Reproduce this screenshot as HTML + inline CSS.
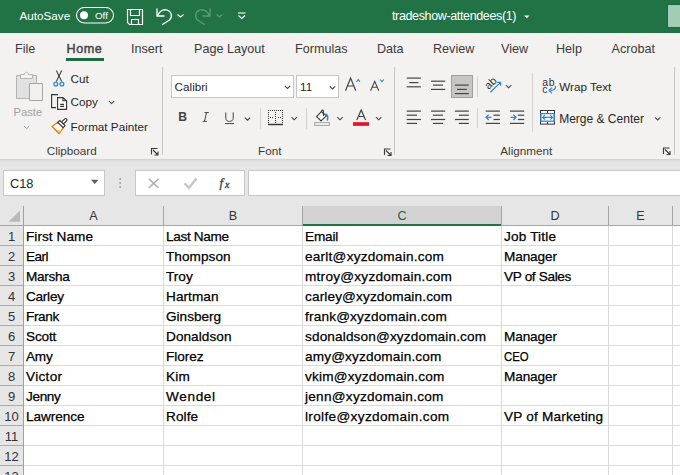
<!DOCTYPE html><html><head><meta charset="utf-8"><style>
*{box-sizing:border-box;margin:0;padding:0}
html,body{width:680px;height:475px;overflow:hidden;background:#fff;font-family:"Liberation Sans",sans-serif}
.a{position:absolute}
.t{position:absolute;white-space:nowrap;line-height:1}
svg{position:absolute;left:0;top:0}
</style></head><body>
<div class="a" style="left:0px;top:0px;width:680px;height:33px;background:#217346;"></div>
<div class="a" style="left:0px;top:33px;width:680px;height:126px;background:#f3f2f1;"></div>
<div class="a" style="left:0px;top:159px;width:680px;height:67px;background:#e6e6e6;"></div>
<div class="a" style="left:0px;top:226px;width:23px;height:249px;background:#e6e6e6;"></div>
<div class="a" style="left:0px;top:159px;width:680px;height:1px;background:#d4d4d4;"></div>
<div class="a" style="left:0px;top:160px;width:680px;height:3px;background:linear-gradient(#dcdcdc,#e6e6e6);"></div>
<div class="t" style="left:19.5px;top:10.10px;font-size:11.7px;color:#fff;font-weight:400;letter-spacing:0px;">AutoSave</div>
<div class="t" style="left:95px;top:10.60px;font-size:9.8px;color:#fff;font-weight:400;letter-spacing:0px;">Off</div>
<div class="t" style="left:392px;top:10.42px;font-size:12.5px;color:#fff;font-weight:400;letter-spacing:-0.36px;">tradeshow-attendees(1)</div>
<div class="a" style="left:667px;top:4px;width:13px;height:24px;background:#a0cdb4;border:1px solid #1a6b3c;border-right:none"></div>
<div class="t" style="left:15px;top:43.33px;font-size:12.6px;color:#3b3a39;font-weight:400;letter-spacing:0px;">File</div>
<div class="t" style="left:66.5px;top:43.33px;font-size:12.6px;color:#444;font-weight:400;letter-spacing:0.55px;-webkit-text-stroke:0.45px #444">Home</div>
<div class="t" style="left:131px;top:43.33px;font-size:12.6px;color:#3b3a39;font-weight:400;letter-spacing:0px;">Insert</div>
<div class="t" style="left:194px;top:43.33px;font-size:12.6px;color:#3b3a39;font-weight:400;letter-spacing:0px;">Page Layout</div>
<div class="t" style="left:295px;top:43.33px;font-size:12.6px;color:#3b3a39;font-weight:400;letter-spacing:0px;">Formulas</div>
<div class="t" style="left:377px;top:43.33px;font-size:12.6px;color:#3b3a39;font-weight:400;letter-spacing:0px;">Data</div>
<div class="t" style="left:433px;top:43.33px;font-size:12.6px;color:#3b3a39;font-weight:400;letter-spacing:0px;">Review</div>
<div class="t" style="left:501px;top:43.33px;font-size:12.6px;color:#3b3a39;font-weight:400;letter-spacing:0px;">View</div>
<div class="t" style="left:556px;top:43.33px;font-size:12.6px;color:#3b3a39;font-weight:400;letter-spacing:0px;">Help</div>
<div class="t" style="left:611.5px;top:43.33px;font-size:12.6px;color:#3b3a39;font-weight:400;letter-spacing:0px;">Acrobat</div>
<div class="a" style="left:66px;top:58px;width:38px;height:3px;background:#1d6b40;"></div>
<div class="t" style="left:13.6px;top:107.42px;font-size:11.2px;color:#a19f9d;font-weight:400;letter-spacing:0px;">Paste</div>
<div class="t" style="left:70.6px;top:72.80px;font-size:11.7px;color:#262626;font-weight:400;letter-spacing:0px;">Cut</div>
<div class="t" style="left:70.6px;top:96.40px;font-size:11.7px;color:#262626;font-weight:400;letter-spacing:0px;">Copy</div>
<div class="t" style="left:70.6px;top:120.60px;font-size:11.7px;color:#262626;font-weight:400;letter-spacing:0px;">Format Painter</div>
<div class="t" style="left:46.7px;top:145.30px;font-size:11.7px;color:#3b3a39;font-weight:400;letter-spacing:0px;">Clipboard</div>
<div class="t" style="left:258.1px;top:145.40px;font-size:11.7px;color:#3b3a39;font-weight:400;letter-spacing:0px;">Font</div>
<div class="t" style="left:500.3px;top:145.10px;font-size:11.7px;color:#3b3a39;font-weight:400;letter-spacing:0px;">Alignment</div>
<div class="t" style="left:559.2px;top:80.90px;font-size:11.7px;color:#262626;font-weight:400;letter-spacing:0px;">Wrap Text</div>
<div class="t" style="left:559.2px;top:112.64px;font-size:12px;color:#262626;font-weight:400;letter-spacing:0px;">Merge &amp; Center</div>
<div class="a" style="left:171px;top:75px;width:123px;height:23px;background:#fff;border:1px solid #c8c6c4"></div>
<div class="a" style="left:296px;top:75px;width:43px;height:23px;background:#fff;border:1px solid #c8c6c4"></div>
<div class="t" style="left:174.6px;top:81.10px;font-size:11.7px;color:#262626;font-weight:400;letter-spacing:0px;">Calibri</div>
<div class="t" style="left:300px;top:81.10px;font-size:11.7px;color:#262626;font-weight:400;letter-spacing:0px;">11</div>
<div class="a" style="left:162px;top:67px;width:1px;height:88px;background:#c8c6c4;"></div>
<div class="a" style="left:394px;top:67px;width:1px;height:88px;background:#c8c6c4;"></div>
<div class="a" style="left:674px;top:67px;width:1px;height:88px;background:#c8c6c4;"></div>
<div class="a" style="left:260px;top:108px;width:1px;height:21px;background:#d2d0ce;"></div>
<div class="a" style="left:306px;top:108px;width:1px;height:21px;background:#d2d0ce;"></div>
<div class="a" style="left:477px;top:76px;width:1px;height:21px;background:#d2d0ce;"></div>
<div class="a" style="left:477px;top:108px;width:1px;height:20px;background:#d2d0ce;"></div>
<div class="a" style="left:532px;top:73px;width:1px;height:59px;background:#d2d0ce;"></div>
<div class="a" style="left:451px;top:75px;width:22px;height:23px;background:#c8c6c4;border:1px solid #a19f9d"></div>
<div class="a" style="left:3px;top:170px;width:102px;height:26px;background:#fff;border:1px solid #c6c6c6"></div>
<div class="t" style="left:10px;top:177.66px;font-size:12.8px;color:#262626;font-weight:400;letter-spacing:0px;">C18</div>
<div class="a" style="left:135px;top:170px;width:110px;height:26px;background:#fff;border:1px solid #c6c6c6"></div>
<div class="a" style="left:248px;top:170px;width:440px;height:26px;background:#fff;border:1px solid #c6c6c6"></div>
<div class="a" style="left:24px;top:226px;width:656px;height:249px;background:#fff;"></div>
<div class="a" style="left:163px;top:226px;width:1px;height:249px;background:#d9d9d9;"></div>
<div class="a" style="left:163px;top:206px;width:1px;height:19px;background:#a6a6a6;"></div>
<div class="a" style="left:302px;top:226px;width:1px;height:249px;background:#d9d9d9;"></div>
<div class="a" style="left:302px;top:206px;width:1px;height:19px;background:#a6a6a6;"></div>
<div class="a" style="left:501px;top:226px;width:1px;height:249px;background:#d9d9d9;"></div>
<div class="a" style="left:501px;top:206px;width:1px;height:19px;background:#a6a6a6;"></div>
<div class="a" style="left:608px;top:226px;width:1px;height:249px;background:#d9d9d9;"></div>
<div class="a" style="left:608px;top:206px;width:1px;height:19px;background:#a6a6a6;"></div>
<div class="a" style="left:672px;top:226px;width:1px;height:249px;background:#d9d9d9;"></div>
<div class="a" style="left:672px;top:206px;width:1px;height:19px;background:#a6a6a6;"></div>
<div class="a" style="left:0px;top:225px;width:680px;height:1px;background:#a6a6a6;"></div>
<div class="a" style="left:303px;top:206px;width:198px;height:18px;background:#d2d2d2;"></div>
<div class="a" style="left:303px;top:224px;width:198px;height:2px;background:#217346;"></div>
<div class="a" style="left:24px;top:245px;width:656px;height:1px;background:#dadada;"></div>
<div class="a" style="left:0px;top:245px;width:23px;height:1px;background:#ababab;"></div>
<div class="t" style="left:0;width:23px;text-align:center;top:229.8px;font-size:13px;color:#333">1</div>
<div class="a" style="left:24px;top:265px;width:656px;height:1px;background:#dadada;"></div>
<div class="a" style="left:0px;top:265px;width:23px;height:1px;background:#ababab;"></div>
<div class="t" style="left:0;width:23px;text-align:center;top:249.8px;font-size:13px;color:#333">2</div>
<div class="a" style="left:24px;top:285px;width:656px;height:1px;background:#dadada;"></div>
<div class="a" style="left:0px;top:285px;width:23px;height:1px;background:#ababab;"></div>
<div class="t" style="left:0;width:23px;text-align:center;top:269.8px;font-size:13px;color:#333">3</div>
<div class="a" style="left:24px;top:305px;width:656px;height:1px;background:#dadada;"></div>
<div class="a" style="left:0px;top:305px;width:23px;height:1px;background:#ababab;"></div>
<div class="t" style="left:0;width:23px;text-align:center;top:289.8px;font-size:13px;color:#333">4</div>
<div class="a" style="left:24px;top:325px;width:656px;height:1px;background:#dadada;"></div>
<div class="a" style="left:0px;top:325px;width:23px;height:1px;background:#ababab;"></div>
<div class="t" style="left:0;width:23px;text-align:center;top:309.8px;font-size:13px;color:#333">5</div>
<div class="a" style="left:24px;top:345px;width:656px;height:1px;background:#dadada;"></div>
<div class="a" style="left:0px;top:345px;width:23px;height:1px;background:#ababab;"></div>
<div class="t" style="left:0;width:23px;text-align:center;top:329.8px;font-size:13px;color:#333">6</div>
<div class="a" style="left:24px;top:365px;width:656px;height:1px;background:#dadada;"></div>
<div class="a" style="left:0px;top:365px;width:23px;height:1px;background:#ababab;"></div>
<div class="t" style="left:0;width:23px;text-align:center;top:349.8px;font-size:13px;color:#333">7</div>
<div class="a" style="left:24px;top:385px;width:656px;height:1px;background:#dadada;"></div>
<div class="a" style="left:0px;top:385px;width:23px;height:1px;background:#ababab;"></div>
<div class="t" style="left:0;width:23px;text-align:center;top:369.8px;font-size:13px;color:#333">8</div>
<div class="a" style="left:24px;top:405px;width:656px;height:1px;background:#dadada;"></div>
<div class="a" style="left:0px;top:405px;width:23px;height:1px;background:#ababab;"></div>
<div class="t" style="left:0;width:23px;text-align:center;top:389.8px;font-size:13px;color:#333">9</div>
<div class="a" style="left:24px;top:425px;width:656px;height:1px;background:#dadada;"></div>
<div class="a" style="left:0px;top:425px;width:23px;height:1px;background:#ababab;"></div>
<div class="t" style="left:0;width:23px;text-align:center;top:409.8px;font-size:13px;color:#333">10</div>
<div class="a" style="left:24px;top:445px;width:656px;height:1px;background:#dadada;"></div>
<div class="a" style="left:0px;top:445px;width:23px;height:1px;background:#ababab;"></div>
<div class="t" style="left:0;width:23px;text-align:center;top:429.8px;font-size:13px;color:#333">11</div>
<div class="a" style="left:24px;top:465px;width:656px;height:1px;background:#dadada;"></div>
<div class="a" style="left:0px;top:465px;width:23px;height:1px;background:#ababab;"></div>
<div class="t" style="left:0;width:23px;text-align:center;top:449.8px;font-size:13px;color:#333">12</div>
<div class="a" style="left:24px;top:485px;width:656px;height:1px;background:#dadada;"></div>
<div class="a" style="left:0px;top:485px;width:23px;height:1px;background:#ababab;"></div>
<div class="t" style="left:0;width:23px;text-align:center;top:469.8px;font-size:13px;color:#333">13</div>
<div class="a" style="left:23px;top:206px;width:1px;height:269px;background:#a0a0a0;"></div>
<div class="t" style="left:24px;width:139px;text-align:center;top:210.4px;font-size:12.6px;color:#333">A</div>
<div class="t" style="left:164px;width:138px;text-align:center;top:210.4px;font-size:12.6px;color:#333">B</div>
<div class="t" style="left:303px;width:198px;text-align:center;top:210.4px;font-size:12.6px;color:#1f5f3a">C</div>
<div class="t" style="left:502px;width:106px;text-align:center;top:210.4px;font-size:12.6px;color:#333">D</div>
<div class="t" style="left:609px;width:63px;text-align:center;top:210.4px;font-size:12.6px;color:#333">E</div>
<div class="t" style="left:26px;top:230.29px;font-size:13.6px;color:#000;font-weight:400;letter-spacing:0.056px;-webkit-text-stroke:0.25px #000">First Name</div>
<div class="t" style="left:166px;top:230.29px;font-size:13.6px;color:#000;font-weight:400;letter-spacing:-0.325px;-webkit-text-stroke:0.25px #000">Last Name</div>
<div class="t" style="left:305px;top:230.29px;font-size:13.6px;color:#000;font-weight:400;letter-spacing:-0.15px;-webkit-text-stroke:0.25px #000">Email</div>
<div class="t" style="left:504px;top:230.29px;font-size:13.6px;color:#000;font-weight:400;letter-spacing:0.175px;-webkit-text-stroke:0.25px #000">Job Title</div>
<div class="t" style="left:26px;top:250.29px;font-size:13.6px;color:#000;font-weight:400;letter-spacing:-0.567px;-webkit-text-stroke:0.25px #000">Earl</div>
<div class="t" style="left:166px;top:250.29px;font-size:13.6px;color:#000;font-weight:400;letter-spacing:0.057px;-webkit-text-stroke:0.25px #000">Thompson</div>
<div class="t" style="left:305px;top:250.29px;font-size:13.6px;color:#000;font-weight:400;letter-spacing:0.233px;-webkit-text-stroke:0.25px #000">earlt@xyzdomain.com</div>
<div class="t" style="left:504px;top:250.29px;font-size:13.6px;color:#000;font-weight:400;letter-spacing:-0.117px;-webkit-text-stroke:0.25px #000">Manager</div>
<div class="t" style="left:26px;top:270.29px;font-size:13.6px;color:#000;font-weight:400;letter-spacing:-0.32px;-webkit-text-stroke:0.25px #000">Marsha</div>
<div class="t" style="left:166px;top:270.29px;font-size:13.6px;color:#000;font-weight:400;letter-spacing:0.0px;-webkit-text-stroke:0.25px #000">Troy</div>
<div class="t" style="left:305px;top:270.29px;font-size:13.6px;color:#000;font-weight:400;letter-spacing:0.256px;-webkit-text-stroke:0.25px #000">mtroy@xyzdomain.com</div>
<div class="t" style="left:504px;top:270.29px;font-size:13.6px;color:#000;font-weight:400;letter-spacing:-0.34px;-webkit-text-stroke:0.25px #000">VP of Sales</div>
<div class="t" style="left:26px;top:290.29px;font-size:13.6px;color:#000;font-weight:400;letter-spacing:-0.26px;-webkit-text-stroke:0.25px #000">Carley</div>
<div class="t" style="left:166px;top:290.29px;font-size:13.6px;color:#000;font-weight:400;letter-spacing:0.067px;-webkit-text-stroke:0.25px #000">Hartman</div>
<div class="t" style="left:305px;top:290.29px;font-size:13.6px;color:#000;font-weight:400;letter-spacing:0.137px;-webkit-text-stroke:0.25px #000">carley@xyzdomain.com</div>
<div class="t" style="left:26px;top:310.29px;font-size:13.6px;color:#000;font-weight:400;letter-spacing:-0.375px;-webkit-text-stroke:0.25px #000">Frank</div>
<div class="t" style="left:166px;top:310.29px;font-size:13.6px;color:#000;font-weight:400;letter-spacing:0.0px;-webkit-text-stroke:0.25px #000">Ginsberg</div>
<div class="t" style="left:305px;top:310.29px;font-size:13.6px;color:#000;font-weight:400;letter-spacing:0.183px;-webkit-text-stroke:0.25px #000">frank@xyzdomain.com</div>
<div class="t" style="left:26px;top:330.29px;font-size:13.6px;color:#000;font-weight:400;letter-spacing:-0.175px;-webkit-text-stroke:0.25px #000">Scott</div>
<div class="t" style="left:166px;top:330.29px;font-size:13.6px;color:#000;font-weight:400;letter-spacing:0.062px;-webkit-text-stroke:0.25px #000">Donaldson</div>
<div class="t" style="left:305px;top:330.29px;font-size:13.6px;color:#000;font-weight:400;letter-spacing:0.143px;-webkit-text-stroke:0.25px #000">sdonaldson@xyzdomain.com</div>
<div class="t" style="left:504px;top:330.29px;font-size:13.6px;color:#000;font-weight:400;letter-spacing:-0.117px;-webkit-text-stroke:0.25px #000">Manager</div>
<div class="t" style="left:26px;top:350.29px;font-size:13.6px;color:#000;font-weight:400;letter-spacing:-0.2px;-webkit-text-stroke:0.25px #000">Amy</div>
<div class="t" style="left:166px;top:350.29px;font-size:13.6px;color:#000;font-weight:400;letter-spacing:-0.06px;-webkit-text-stroke:0.25px #000">Florez</div>
<div class="t" style="left:305px;top:350.29px;font-size:13.6px;color:#000;font-weight:400;letter-spacing:0.15px;-webkit-text-stroke:0.25px #000">amy@xyzdomain.com</div>
<div class="t" style="left:504px;top:350.29px;font-size:13.6px;color:#000;font-weight:400;letter-spacing:0px;transform:scaleX(0.84);transform-origin:0 0;-webkit-text-stroke:0.25px #000">CEO</div>
<div class="t" style="left:26px;top:370.29px;font-size:13.6px;color:#000;font-weight:400;letter-spacing:0.32px;-webkit-text-stroke:0.25px #000">Victor</div>
<div class="t" style="left:166px;top:370.29px;font-size:13.6px;color:#000;font-weight:400;letter-spacing:0.2px;-webkit-text-stroke:0.25px #000">Kim</div>
<div class="t" style="left:305px;top:370.29px;font-size:13.6px;color:#000;font-weight:400;letter-spacing:0.188px;-webkit-text-stroke:0.25px #000">vkim@xyzdomain.com</div>
<div class="t" style="left:504px;top:370.29px;font-size:13.6px;color:#000;font-weight:400;letter-spacing:-0.117px;-webkit-text-stroke:0.25px #000">Manager</div>
<div class="t" style="left:26px;top:390.29px;font-size:13.6px;color:#000;font-weight:400;letter-spacing:-0.35px;-webkit-text-stroke:0.25px #000">Jenny</div>
<div class="t" style="left:166px;top:390.29px;font-size:13.6px;color:#000;font-weight:400;letter-spacing:0.64px;-webkit-text-stroke:0.25px #000">Wendel</div>
<div class="t" style="left:305px;top:390.29px;font-size:13.6px;color:#000;font-weight:400;letter-spacing:0.265px;-webkit-text-stroke:0.25px #000">jenn@xyzdomain.com</div>
<div class="t" style="left:26px;top:410.29px;font-size:13.6px;color:#000;font-weight:400;letter-spacing:-0.071px;-webkit-text-stroke:0.25px #000">Lawrence</div>
<div class="t" style="left:166px;top:410.29px;font-size:13.6px;color:#000;font-weight:400;letter-spacing:0.1px;-webkit-text-stroke:0.25px #000">Rolfe</div>
<div class="t" style="left:305px;top:410.29px;font-size:13.6px;color:#000;font-weight:400;letter-spacing:0.337px;-webkit-text-stroke:0.25px #000">lrolfe@xyzdomain.com</div>
<div class="t" style="left:504px;top:410.29px;font-size:13.6px;color:#000;font-weight:400;letter-spacing:0.193px;-webkit-text-stroke:0.25px #000">VP of Marketing</div>
<div class="t" style="left:178.3px;top:111.07px;font-size:12.2px;color:#444;font-weight:700;letter-spacing:0px;">B</div>
<svg width="680" height="475" viewBox="0 0 680 475"><g fill="none" stroke="#fff" stroke-width="1.2"><path d="M127.5 9.5H142.5V24.5H129.5L127.5 22.5Z"/><path d="M130.5 9.5V15.5H139.5V9.5"/><path d="M131.5 24.5V19.5H138.5V24.5"/></g><rect x="76.5" y="7.5" width="37" height="15.5" rx="7.75" fill="none" stroke="#fff" stroke-width="1.1"/><circle cx="84" cy="15.2" r="4" fill="#fff"/><g fill="none" stroke="#fff" stroke-width="1.3" stroke-linecap="round"><path d="M157 9V16H164"/><path d="M157.6 15.4 C160 10.5 163 9.5 166 9.8 C171.5 10.5 173 16.5 169.5 20 L162.5 24.5"/></g><path d="M177.5 14.5L180.5 17L183.5 14.5" fill="none" stroke="#fff" stroke-width="1.1"/><g fill="none" stroke="#5e9c78" stroke-width="1.3" stroke-linecap="round"><path d="M210 9V16H203"/><path d="M209.4 15.4 C207 10.5 204 9.5 201 9.8 C195.5 10.5 194 16.5 197.5 20 L204.5 24.5"/></g><path d="M216.5 14.5L219.5 17L222.5 14.5" fill="none" stroke="#5e9c78" stroke-width="1.1"/><g fill="none" stroke="#fff" stroke-width="1.1"><path d="M238 13H245.5"/><path d="M238.5 15.5L241.8 18.5L245 15.5"/></g><path d="M524 15.5H529.5L526.75 18.2Z" fill="#fff"/><g stroke-width="1"><path d="M16.5 75.5H36.5V98.5H16.5Z" fill="#e1e1e1" stroke="#b4b4b4"/><path d="M20.5 78.5V74.5H24.5C24.5 71.5 28.5 71.5 28.5 74.5H32.5V78.5Z" fill="#f3f2f1" stroke="#b4b4b4"/><path d="M29.5 83.5H42.5V100.5H29.5Z" fill="#f0f0f0" stroke="#a6a6a6"/></g><path d="M24 126L26.7 128.7L29.4 126" fill="none" stroke="#a19f9d" stroke-width="1"/><g fill="none" stroke="#444" stroke-width="1.1"><path d="M56.3 70.6L61.7 81.4"/><path d="M61.7 70.6L56.3 81.4"/></g><g fill="none" stroke="#2b88d8" stroke-width="1.3"><circle cx="55.8" cy="84" r="1.9"/><circle cx="61.9" cy="84" r="1.9"/></g><g fill="none" stroke="#333" stroke-width="1.1"><path d="M58 94.6H51.6V107.6H56"/><path d="M57.6 97.6H62.9L66.6 101V109.4H57.6Z" fill="#fff"/><path d="M62.9 97.6V100.8H66.6"/><path d="M60.2 104.4H64M60.2 106.4H64"/></g><path d="M109 101.2L111.6 103.6L114.2 101.2" fill="none" stroke="#444" stroke-width="1.1"/><g transform="translate(60.5 125) rotate(45)" stroke-linejoin="round"><path d="M-4 0H4L5 7H-5Z" fill="#fff" stroke="#e8821e" stroke-width="1.3"/><path d="M0.5 6.3L4.2 3.2L4.6 6.3Z" fill="#f9cf72"/><path d="M-5 7H5" stroke="#e8821e" stroke-width="1.3"/><rect x="-3.7" y="-2.8" width="7.4" height="2.8" fill="#fff" stroke="#333" stroke-width="1.1"/><rect x="-1.3" y="-8.6" width="2.6" height="5.8" rx="1.3" fill="#fff" stroke="#333" stroke-width="1.1"/></g><g fill="none" stroke="#3b3a39" stroke-width="1.15"><path d="M151.5 154.5V148.5H157.5"/><path d="M153 150L158 155M154.5 155H158V151.5"/></g><g fill="none" stroke="#3b3a39" stroke-width="1.15"><path d="M384.5 155.0V149.0H390.5"/><path d="M386 150.5L391 155.5M387.5 155.5H391V152.0"/></g><g fill="none" stroke="#3b3a39" stroke-width="1.15"><path d="M663.5 154.0V148.0H669.5"/><path d="M665 149.5L670 154.5M666.5 154.5H670V151.0"/></g><path d="M284.8 85.8L287.5 88.39999999999999L290.2 85.8" fill="none" stroke="#444" stroke-width="1.1"/><path d="M329.8 86.3L332.5 88.89999999999999L335.2 86.3" fill="none" stroke="#444" stroke-width="1.1"/><path d="M244.8 117.6L247.5 120.19999999999999L250.20000000000002 117.6" fill="none" stroke="#444" stroke-width="1.1"/><path d="M291.5 117.2L294.2 119.8L296.9 117.2" fill="none" stroke="#444" stroke-width="1.1"/><path d="M337.3 117.2L340.0 119.8L342.7 117.2" fill="none" stroke="#444" stroke-width="1.1"/><path d="M376 117.2L378.7 119.8L381.4 117.2" fill="none" stroke="#444" stroke-width="1.1"/><path d="M505.9 85.2L508.59999999999997 87.8L511.29999999999995 85.2" fill="none" stroke="#444" stroke-width="1.1"/><path d="M655 117.3L657.7 119.89999999999999L660.4 117.3" fill="none" stroke="#444" stroke-width="1.1"/><path d="M345.5 90.7L350.6 78L355.8 90.7M347.5 86H353.7" fill="none" stroke="#444" stroke-width="1.2"/><path d="M356.5 81.8L358.2 79.5L359.9 81.8" fill="none" stroke="#2b88d8" stroke-width="1.1"/><path d="M370.6 90.7L374.7 81.3L378.8 90.7M372.2 87.2H377.2" fill="none" stroke="#444" stroke-width="1.1"/><path d="M380 79.5L381.9 81.7L383.8 79.5" fill="none" stroke="#2b88d8" stroke-width="1.1"/><path d="M206.5 112.6L204.5 121.4M204.5 112.6H208.8M202.6 121.4H206.8" fill="none" stroke="#444" stroke-width="1"/><path d="M225.8 112.4V118.5C225.8 122.4 233.2 122.4 233.2 118.5V112.4M225 123.6H234" fill="none" stroke="#444" stroke-width="1"/><g fill="#333"><rect x="270" y="110" width="1" height="1"/><rect x="278" y="117" width="1" height="1"/><rect x="275" y="112" width="1" height="1"/><rect x="275" y="118" width="1" height="1"/><rect x="268" y="112" width="1" height="1"/><rect x="268" y="118" width="1" height="1"/><rect x="272" y="110" width="1" height="1"/><rect x="280" y="117" width="1" height="1"/><rect x="282" y="114" width="1" height="1"/><rect x="282" y="120" width="1" height="1"/><rect x="274" y="110" width="1" height="1"/><rect x="276" y="110" width="1" height="1"/><rect x="278" y="110" width="1" height="1"/><rect x="275" y="114" width="1" height="1"/><rect x="275" y="120" width="1" height="1"/><rect x="280" y="110" width="1" height="1"/><rect x="268" y="114" width="1" height="1"/><rect x="268" y="120" width="1" height="1"/><rect x="282" y="110" width="1" height="1"/><rect x="282" y="116" width="1" height="1"/><rect x="282" y="122" width="1" height="1"/><rect x="270" y="117" width="1" height="1"/><rect x="275" y="116" width="1" height="1"/><rect x="275" y="122" width="1" height="1"/><rect x="268" y="110" width="1" height="1"/><rect x="268" y="116" width="1" height="1"/><rect x="282" y="112" width="1" height="1"/><rect x="282" y="118" width="1" height="1"/><rect x="272" y="117" width="1" height="1"/><rect x="268" y="122" width="1" height="1"/><rect x="268" y="123.8" width="15" height="1.4"/></g><path d="M316.6 116.7L321.4 111.6L326.4 115.8L321 120.8Z" fill="#fff" stroke="#333" stroke-width="1.1" stroke-linejoin="round"/><path d="M321.4 111.6C321.6 109.6 323.4 109.6 323.4 111.4V115.6" fill="none" stroke="#333" stroke-width="1.1" stroke-linecap="round"/><path d="M326 114.2C327.6 115 328 117.5 327.4 120" fill="none" stroke="#2b88d8" stroke-width="1.6" stroke-linecap="round"/><rect x="314.7" y="122.7" width="14.6" height="2.6" fill="#fff" stroke="#999" stroke-width="1"/><path d="M356.8 120.1L361.2 110L365.6 120.1M358.5 116.5H364" fill="none" stroke="#444" stroke-width="1.2"/><rect x="353" y="122.2" width="16" height="3.6" fill="#e81123"/><path d="M406.7 78.1H420.9" stroke="#444" stroke-width="1.2"/><path d="M409.3 82.6H418.4" stroke="#444" stroke-width="1.2"/><path d="M406.7 86.8H420.9" stroke="#444" stroke-width="1.2"/><path d="M431 81.2H445.2" stroke="#444" stroke-width="1.2"/><path d="M433 85.1H443" stroke="#444" stroke-width="1.2"/><path d="M431 89.4H445.2" stroke="#444" stroke-width="1.2"/><path d="M454.9 85.1H468.8" stroke="#444" stroke-width="1.2"/><path d="M457 89.4H466.7" stroke="#444" stroke-width="1.2"/><path d="M454.9 93.6H468.8" stroke="#444" stroke-width="1.2"/><path d="M406.7 111.1H420.9" stroke="#444" stroke-width="1.2"/><path d="M406.7 115.2H417" stroke="#444" stroke-width="1.2"/><path d="M406.7 119.5H420.9" stroke="#444" stroke-width="1.2"/><path d="M406.7 123.4H417" stroke="#444" stroke-width="1.2"/><path d="M431 111.1H445.2" stroke="#444" stroke-width="1.2"/><path d="M433 115.2H443" stroke="#444" stroke-width="1.2"/><path d="M431 119.5H445.2" stroke="#444" stroke-width="1.2"/><path d="M433 123.4H443" stroke="#444" stroke-width="1.2"/><path d="M454.9 111.1H468.8" stroke="#444" stroke-width="1.2"/><path d="M458.8 115.2H468.8" stroke="#444" stroke-width="1.2"/><path d="M454.9 119.5H468.8" stroke="#444" stroke-width="1.2"/><path d="M458.8 123.4H468.8" stroke="#444" stroke-width="1.2"/><path d="M485.7 111.1H499.9" stroke="#444" stroke-width="1.2"/><path d="M493.5 115.2H499.9" stroke="#444" stroke-width="1.2"/><path d="M493.5 119.5H499.9" stroke="#444" stroke-width="1.2"/><path d="M485.7 123.4H499.9" stroke="#444" stroke-width="1.2"/><path d="M491.5 117.3H486M488.7 114.6L486 117.3L488.7 120" fill="none" stroke="#2b88d8" stroke-width="1.3"/><path d="M510 111.1H524.2" stroke="#444" stroke-width="1.2"/><path d="M517.8 115.2H524.2" stroke="#444" stroke-width="1.2"/><path d="M517.8 119.5H524.2" stroke="#444" stroke-width="1.2"/><path d="M510 123.4H524.2" stroke="#444" stroke-width="1.2"/><path d="M510.5 117.3H516M513.3 114.6L516 117.3L513.3 120" fill="none" stroke="#2b88d8" stroke-width="1.3"/><text x="0" y="0" font-family="Liberation Sans" font-size="11" fill="#333" transform="translate(488.8 90) rotate(-45)">ab</text><path d="M490.3 92.3L500.3 82.6M497.2 82.3H500.6V85.7" fill="none" stroke="#2b88d8" stroke-width="1.2"/><text x="542.2" y="85.5" font-family="Liberation Sans" font-size="10.5" letter-spacing="0.6" fill="#333">ab</text><text x="542.2" y="93" font-family="Liberation Sans" font-size="10.5" fill="#333">c</text><path d="M555.5 86.3C556 89.2 554 90.4 549.2 90.4M551.6 87.9L549 90.4L551.6 92.9" fill="none" stroke="#2b88d8" stroke-width="1.3" stroke-linecap="round" stroke-linejoin="round"/><rect x="540.5" y="110.5" width="14" height="13.6" fill="#fff" stroke="#333" stroke-width="1"/><path d="M547.5 110.5V113.3M547.5 121.5V124.1" stroke="#333" stroke-width="1"/><rect x="540.9" y="113.6" width="13.2" height="7.6" fill="#fff" stroke="#2b88d8" stroke-width="1.3"/><path d="M542.6 117.4H552.6M544.9 115.1L542.6 117.4L544.9 119.7M550.3 115.1L552.6 117.4L550.3 119.7" fill="none" stroke="#2b88d8" stroke-width="1.2"/><path d="M148.8 178.8L158.5 187.8M158.5 178.8L148.8 187.8" stroke="#b4b4b4" stroke-width="1.6"/><path d="M184.5 183.5L189 187.8L196.5 178.5" fill="none" stroke="#c4c4c4" stroke-width="2.3"/><text x="219.5" y="187" font-family="Liberation Serif" font-style="italic" font-size="13" fill="#444" stroke="#444" stroke-width="0.35">f</text><text x="225" y="187.5" font-family="Liberation Serif" font-style="italic" font-size="10" fill="#444" stroke="#444" stroke-width="0.35">x</text><path d="M91 179.8H98.5L94.75 184Z" fill="#605e5c"/><g fill="#a0a0a0"><circle cx="120.2" cy="179" r="1"/><circle cx="120.2" cy="183" r="1"/><circle cx="120.2" cy="187" r="1"/></g><path d="M8.6 221.8H20V210.4Z" fill="#b8b8b8"/></svg>
</body></html>
